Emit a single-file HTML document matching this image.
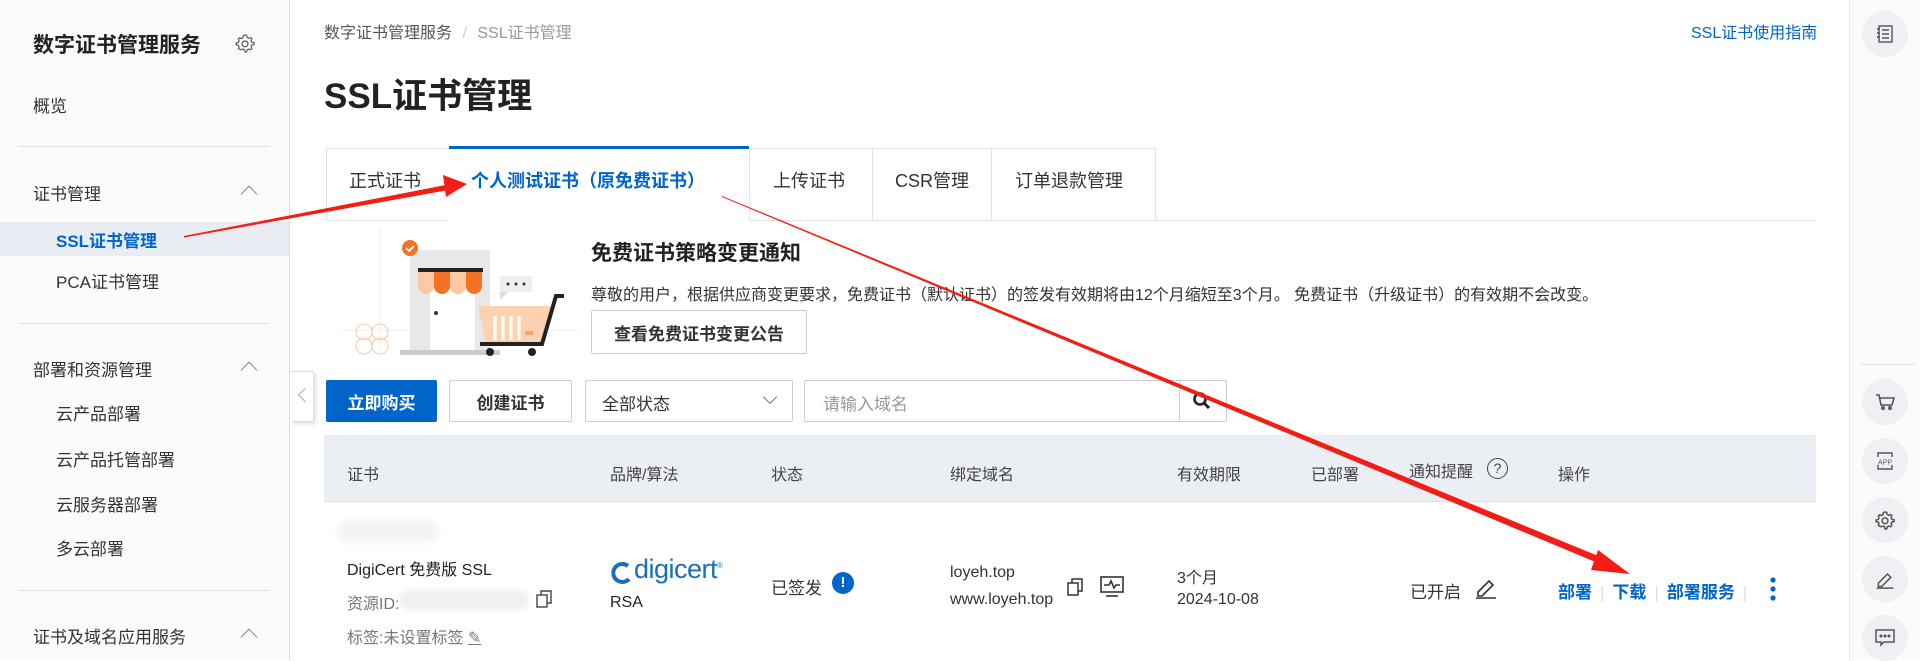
<!DOCTYPE html>
<html><head><meta charset="utf-8"><style>
*{margin:0;padding:0;box-sizing:border-box}
body{width:1920px;height:660px;overflow:hidden;background:#fff;font-family:"Liberation Sans","Noto Sans CJK SC",sans-serif;color:#333;font-size:17px;position:relative}
.a{position:absolute;white-space:nowrap}
.side{position:absolute;left:0;top:0;width:290px;height:660px;background:#fbfbfb;border-right:1px solid #ddd}
.hr{position:absolute;left:18px;width:252px;height:1px;background:#e3e3e3}
.chev{position:absolute;width:12px;height:12px;border-left:1.6px solid #888;border-top:1.6px solid #888;transform:rotate(45deg)}
.rb{position:absolute;left:1849px;top:0;width:71px;height:660px;background:#fbfbfb;border-left:1px solid #e6e6e6}
.circ{position:absolute;left:1862px;width:46px;height:46px;border-radius:50%;background:#eef0f3;display:flex;align-items:center;justify-content:center}
.btn{position:absolute;border:1px solid #c9cdd4;border-radius:2px;background:#fff;display:flex;align-items:center;justify-content:center;font-weight:bold;color:#333}
.th{position:absolute;top:461px;font-size:16px;color:#444}
.lk{color:#0064c8;font-weight:bold}
</style></head><body>

<div class="side">
  <div class="a" style="left:33px;top:29px;font-size:21px;font-weight:bold;color:#222">数字证书管理服务</div>
  <svg class="a" style="left:235px;top:33px" width="20" height="20" viewBox="0 0 24 24" fill="none" stroke="#666" stroke-width="1.6"><path d="M12 2.5l2 .3.6 2.5 1.8 1 2.4-.8 1.4 1.5-.8 2.4 1 1.8 2.5.6v2l-2.5.6-1 1.8.8 2.4-1.4 1.5-2.4-.8-1.8 1-.6 2.5h-2l-.6-2.5-1.8-1-2.4.8L4 18.7l.8-2.4-1-1.8L1.3 14v-2l2.5-.6 1-1.8L4 7.2l1.5-1.4 2.4.8 1.8-1L10.3 3z"/><circle cx="12" cy="13" r="3.5"/></svg>
  <div class="a" style="left:33px;top:92px">概览</div>
  <div class="hr" style="top:146px"></div>
  <div class="a" style="left:33px;top:180px">证书管理</div>
  <div class="chev" style="left:243px;top:188px"></div>
  <div class="a" style="left:0;top:222px;width:289px;height:34px;background:#e9edf3"></div>
  <div class="a" style="left:56px;top:227px;font-weight:bold;color:#0064c8">SSL证书管理</div>
  <div class="a" style="left:56px;top:268px">PCA证书管理</div>
  <div class="hr" style="top:323px"></div>
  <div class="a" style="left:33px;top:356px">部署和资源管理</div>
  <div class="chev" style="left:243px;top:364px"></div>
  <div class="a" style="left:56px;top:400px">云产品部署</div>
  <div class="a" style="left:56px;top:446px">云产品托管部署</div>
  <div class="a" style="left:56px;top:491px">云服务器部署</div>
  <div class="a" style="left:56px;top:535px">多云部署</div>
  <div class="hr" style="top:590px"></div>
  <div class="a" style="left:33px;top:623px">证书及域名应用服务</div>
  <div class="chev" style="left:243px;top:631px"></div>
</div>

<div class="a" style="left:291px;top:371px;width:23px;height:51px;background:#fff;border:1px solid #ddd;border-left:none;box-shadow:2px 2px 4px rgba(0,0,0,.12)"></div>
<div class="a" style="left:300px;top:390px;width:10px;height:10px;border-left:1.5px solid #aaa;border-bottom:1.5px solid #aaa;transform:rotate(45deg)"></div>

<div class="a" style="left:324px;top:19px;font-size:16px;color:#555">数字证书管理服务 <span style="color:#ccc;margin:0 6px">/</span> <span style="color:#999">SSL证书管理</span></div>
<div class="a" style="left:1691px;top:19px;font-size:16px;color:#0064c8">SSL证书使用指南</div>
<div class="a" style="left:324px;top:68px;font-size:35px;font-weight:bold;color:#222">SSL证书管理</div>

<div class="a" style="left:326px;top:220px;width:1490px;height:1px;background:#e3e3e3"></div>
<div class="a" style="left:326px;top:148px;width:124px;height:73px;border:1px solid #e3e3e3;background:#fff"></div>
<div class="a" style="left:349px;top:167px;font-size:18px">正式证书</div>
<div class="a" style="left:449px;top:146px;width:300px;height:76px;background:#fff;border-top:3px solid #0064c8"></div>
<div class="a" style="left:471px;top:167px;font-size:18px;font-weight:bold;color:#0064c8">个人测试证书（原免费证书）</div>
<div class="a" style="left:749px;top:148px;width:407px;height:73px;border:1px solid #e3e3e3;background:#fff"></div>
<div class="a" style="left:872px;top:148px;width:1px;height:73px;background:#e3e3e3"></div>
<div class="a" style="left:991px;top:148px;width:1px;height:73px;background:#e3e3e3"></div>
<div class="a" style="left:773px;top:167px;font-size:18px">上传证书</div>
<div class="a" style="left:895px;top:167px;font-size:18px">CSR管理</div>
<div class="a" style="left:1015px;top:167px;font-size:18px">订单退款管理</div>

<svg class="a" style="left:340px;top:228px" width="240" height="130" viewBox="0 0 240 130">
  <line x1="0" y1="102" x2="240" y2="102" stroke="#f2f2f2"/>
  <line x1="40" y1="0" x2="40" y2="130" stroke="#f2f2f2"/>
  <rect x="70" y="22" width="80" height="100" fill="#e8e8e8"/>
  <rect x="90" y="40" width="45" height="82" fill="#fff"/>
  <rect x="60" y="122" width="100" height="5" fill="#ccc"/>
  <rect x="78" y="40" width="65" height="4" fill="#222"/>
  <path d="M78 44h16v14a8 8 0 0 1-16 0z" fill="#fdc9a5"/><path d="M94 44h16v14a8 8 0 0 1-16 0z" fill="#f57123"/><path d="M110 44h16v14a8 8 0 0 1-16 0z" fill="#fdc9a5"/><path d="M126 44h16v14a8 8 0 0 1-16 0z" fill="#f57123"/>
  <circle cx="96" cy="85" r="2" fill="#333"/>
  <circle cx="70" cy="20" r="8" fill="#f57123"/><path d="M66 20l3 3 5-5" stroke="#fff" stroke-width="1.8" fill="none"/>
  <rect x="160" y="48" width="32" height="16" fill="#eee"/><path d="M160 64v8l8-8z" fill="#ddd"/>
  <circle cx="168" cy="56" r="1.5" fill="#333"/><circle cx="176" cy="56" r="1.5" fill="#333"/><circle cx="184" cy="56" r="1.5" fill="#333"/>
  <path d="M138 78h75l-12 38h-55z" fill="#fdd2b0"/>
  <g stroke="#fff" stroke-width="3"><line x1="155" y1="88" x2="155" y2="112"/><line x1="163" y1="88" x2="163" y2="112"/><line x1="171" y1="88" x2="171" y2="112"/><line x1="179" y1="88" x2="179" y2="112"/></g>
  <rect x="185" y="103" width="8" height="4" fill="#f5a46e"/>
  <path d="M140 116h62l14-48h8" stroke="#222" stroke-width="4" fill="none"/>
  <circle cx="150" cy="124" r="4" fill="#222"/><circle cx="192" cy="124" r="4" fill="#222"/>
  <g fill="none" stroke="#f7c9a8"><circle cx="24" cy="104" r="8"/><circle cx="40" cy="104" r="8"/><circle cx="24" cy="118" r="8"/><circle cx="40" cy="118" r="8"/></g>
</svg>
<div class="a" style="left:591px;top:237px;font-size:21px;font-weight:bold;color:#222">免费证书策略变更通知</div>
<div class="a" style="left:591px;top:281px;font-size:16px;color:#333">尊敬的用户，根据供应商变更要求，免费证书（默认证书）的签发有效期将由12个月缩短至3个月。 免费证书（升级证书）的有效期不会改变。</div>
<div class="btn" style="left:591px;top:310px;width:216px;height:44px;font-size:17px">查看免费证书变更公告</div>

<div class="btn" style="left:326px;top:380px;width:111px;height:42px;background:#0064c8;border-color:#0064c8;color:#fff">立即购买</div>
<div class="btn" style="left:449px;top:380px;width:123px;height:42px">创建证书</div>
<div class="a" style="left:585px;top:380px;width:208px;height:42px;border:1px solid #c9cdd4;border-radius:2px;background:#fff"></div>
<div class="a" style="left:602px;top:390px;font-size:17px">全部状态</div>
<div class="a" style="left:765px;top:392px;width:10px;height:10px;border-right:1.5px solid #777;border-bottom:1.5px solid #777;transform:rotate(45deg)"></div>
<div class="a" style="left:804px;top:380px;width:423px;height:42px;border:1px solid #c9cdd4;border-radius:2px;background:#fff"></div>
<div class="a" style="left:1179px;top:380px;width:1px;height:42px;background:#c9cdd4"></div>
<div class="a" style="left:823px;top:390px;font-size:17px;color:#999">请输入域名</div>
<svg class="a" style="left:1192px;top:391px" width="20" height="20" viewBox="0 0 20 20"><circle cx="8" cy="8" r="5.5" stroke="#222" stroke-width="2.6" fill="none"/><line x1="12" y1="12" x2="17" y2="17" stroke="#222" stroke-width="3"/></svg>

<div class="a" style="left:324px;top:435px;width:1492px;height:67px;background:#ebeef3;border-bottom:1px solid #dde0e5"></div>
<div class="th" style="left:347px">证书</div>
<div class="th" style="left:610px">品牌/算法</div>
<div class="th" style="left:771px">状态</div>
<div class="th" style="left:950px">绑定域名</div>
<div class="th" style="left:1177px">有效期限</div>
<div class="th" style="left:1311px">已部署</div>
<div class="th" style="left:1409px;top:458px">通知提醒</div>
<div class="a" style="left:1487px;top:458px;width:21px;height:21px;border:1.5px solid #444;border-radius:50%;font-size:14px;text-align:center;line-height:18px;color:#444">?</div>
<div class="th" style="left:1558px">操作</div>

<div class="a" style="left:338px;top:520px;width:100px;height:22px;background:#f4f4f4;border-radius:8px;filter:blur(3px)"></div>
<div class="a" style="left:347px;top:556px;font-size:16px;color:#222">DigiCert 免费版 SSL</div>
<div class="a" style="left:347px;top:590px;font-size:16px;color:#777">资源ID:</div>
<div class="a" style="left:400px;top:590px;width:130px;height:20px;background:#f0f0f0;border-radius:8px;filter:blur(3px)"></div>
<svg class="a" style="left:536px;top:590px" width="16" height="18" viewBox="0 0 16 18" fill="none" stroke="#444" stroke-width="1.4"><rect x="1" y="5" width="10" height="12"/><path d="M5 5V1h10v12h-4"/></svg>
<div class="a" style="left:347px;top:624px;font-size:16px;color:#777">标签:未设置标签 <span style="text-decoration:underline">✎</span></div>

<svg class="a" style="left:610px;top:561px" width="24" height="24" viewBox="0 0 24 24"><path d="M18 5A9 9 0 1 0 19 18" stroke="#1a6fb8" stroke-width="4" fill="none"/></svg>
<div class="a" style="left:634px;top:554px;font-size:27px;color:#1a6fb8;letter-spacing:-0.5px">digicert<sup style="font-size:8px">®</sup></div>
<div class="a" style="left:610px;top:594px;font-size:16px;color:#222">RSA</div>
<div class="a" style="left:771px;top:574px;font-size:17px">已签发</div>
<div class="a" style="left:832px;top:572px;width:22px;height:22px;border-radius:50%;background:#0064c8;color:#fff;font-weight:bold;text-align:center;line-height:22px;font-size:15px">!</div>
<div class="a" style="left:950px;top:564px;font-size:16px">loyeh.top</div>
<div class="a" style="left:950px;top:591px;font-size:16px">www.loyeh.top</div>
<svg class="a" style="left:1067px;top:578px" width="16" height="18" viewBox="0 0 16 18" fill="none" stroke="#333" stroke-width="1.5"><rect x="1" y="5" width="10" height="12"/><path d="M5 5V1h10v12h-4"/></svg>
<svg class="a" style="left:1100px;top:576px" width="24" height="22" viewBox="0 0 24 22" fill="none" stroke="#333" stroke-width="1.6"><rect x="1" y="1" width="22" height="15"/><path d="M4 9h5l2-4 3 7 2-3h4"/><line x1="6" y1="20" x2="18" y2="20"/></svg>
<div class="a" style="left:1177px;top:564px;font-size:16px">3个月</div>
<div class="a" style="left:1177px;top:591px;font-size:16px">2024-10-08</div>
<div class="a" style="left:1410px;top:578px;font-size:17px">已开启</div>
<svg class="a" style="left:1474px;top:575px" width="24" height="24" viewBox="0 0 24 24" fill="none" stroke="#333" stroke-width="1.6"><path d="M4 17l11-11 4 4-11 11H4z"/><line x1="2" y1="23" x2="22" y2="23"/></svg>
<div class="a" style="left:1558px;top:578px;font-size:17px"><span class="lk">部署</span><span style="color:#ddd;margin:0 8px">|</span><span class="lk">下载</span><span style="color:#ddd;margin:0 8px">|</span><span class="lk">部署服务</span><span style="color:#ddd;margin:0 8px">|</span></div>
<svg class="a" style="left:1769px;top:576px" width="8" height="26"><circle cx="4" cy="4" r="2.6" fill="#0064c8"/><circle cx="4" cy="13" r="2.6" fill="#0064c8"/><circle cx="4" cy="22" r="2.6" fill="#0064c8"/></svg>

<div class="rb"></div>
<div class="a" style="left:1860px;top:364px;width:55px;height:1px;background:#e3e3e3"></div>
<div class="circ" style="top:11px"><svg width="18" height="18" viewBox="0 0 18 18" fill="none" stroke="#555" stroke-width="1.4"><rect x="3" y="1" width="13" height="16"/><path d="M6 5h7M6 9h7M6 13h7M1 4h3M1 8h3M1 12h3"/></svg></div>
<div class="circ" style="top:379px"><svg width="20" height="18" viewBox="0 0 20 18" fill="none" stroke="#555" stroke-width="1.6"><path d="M1 2h3l2 10h11l2-7H5"/><circle cx="8" cy="15" r="1.3"/><circle cx="15" cy="15" r="1.3"/></svg></div>
<div class="circ" style="top:438px"><svg width="20" height="20" viewBox="0 0 20 20" fill="none" stroke="#555" stroke-width="1.4"><path d="M3 6V2h14v4M3 14v4h14v-4"/><text x="10" y="13.5" font-size="7" text-anchor="middle" fill="#555" stroke="none" font-family="Liberation Sans">APP</text></svg></div>
<div class="circ" style="top:497px"><svg width="20" height="20" viewBox="0 0 24 24" fill="none" stroke="#555" stroke-width="1.8"><path d="M12 2.5l2 .3.6 2.5 1.8 1 2.4-.8 1.4 1.5-.8 2.4 1 1.8 2.5.6v2l-2.5.6-1 1.8.8 2.4-1.4 1.5-2.4-.8-1.8 1-.6 2.5h-2l-.6-2.5-1.8-1-2.4.8L4 18.7l.8-2.4-1-1.8L1.3 14v-2l2.5-.6 1-1.8L4 7.2l1.5-1.4 2.4.8 1.8-1L10.3 3z"/><circle cx="12" cy="13" r="3.5"/></svg></div>
<div class="circ" style="top:556px"><svg width="20" height="20" viewBox="0 0 24 24" fill="none" stroke="#555" stroke-width="1.8"><path d="M4 17l11-11 4 4-11 11H4z"/><line x1="2" y1="23" x2="22" y2="23"/></svg></div>
<div class="circ" style="top:615px"><svg width="20" height="18" viewBox="0 0 20 18" fill="none" stroke="#555" stroke-width="1.5"><path d="M1 1h18v12H9l-3 3v-3H1z"/><circle cx="6" cy="7" r=".8" fill="#555"/><circle cx="10" cy="7" r=".8" fill="#555"/><circle cx="14" cy="7" r=".8" fill="#555"/></svg></div>

<svg class="a" style="left:0;top:0" width="1920" height="660" viewBox="0 0 1920 660">
  <polygon points="184,236 448,184.5 448.6,190 184,237.5" fill="#f21d14"/>
  <polygon points="443,175 467,184 446,197" fill="#f21d14"/>
  <polygon points="722,196 1608,560 1605,566 722,197" fill="#f21d14"/>
  <polygon points="1598,550 1630,574 1591,570" fill="#f21d14"/>
</svg>
</body></html>
